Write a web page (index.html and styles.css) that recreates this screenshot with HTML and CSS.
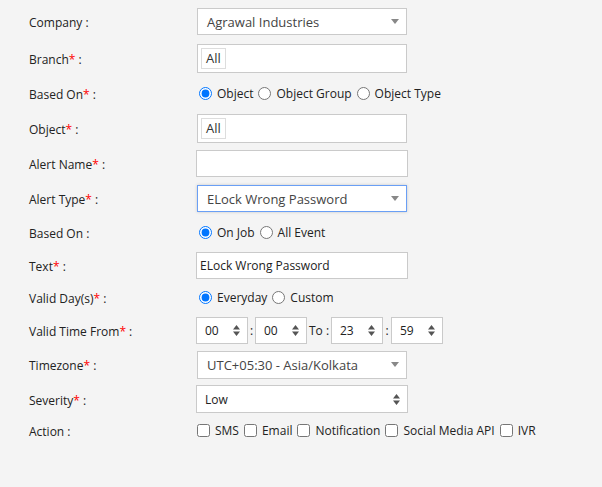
FILE: index.html
```html
<!DOCTYPE html>
<html>
<head>
  <meta charset="utf-8">
  <title>Alert Setting</title>
  <link rel="stylesheet" href="styles.css">
</head>
<body>
  <form class="alert-form">
    <label class="field-label">Company :</label>
    <div class="field">
      <div class="select-box">
        <span>Agrawal Industries</span>
        <svg class="caret" width="8" height="5" viewBox="0 0 8 5"><path d="M0 0h8L4 5z"/></svg>
      </div>
    </div>

    <label class="field-label">Branch<span class="req">*</span> :</label>
    <div class="field">
      <div class="multi-box"><span class="tag">All</span></div>
    </div>

    <label class="field-label">Based On<span class="req">*</span> :</label>
    <div class="field options">
      <label class="opt"><input type="radio" name="based" checked> Object</label>
      <label class="opt"><input type="radio" name="based"> Object Group</label>
      <label class="opt"><input type="radio" name="based"> Object Type</label>
    </div>

    <label class="field-label">Object<span class="req">*</span> :</label>
    <div class="field">
      <div class="multi-box"><span class="tag">All</span></div>
    </div>

    <label class="field-label">Alert Name<span class="req">*</span> :</label>
    <div class="field">
      <input class="text-input" type="text" value="">
    </div>

    <label class="field-label">Alert Type<span class="req">*</span> :</label>
    <div class="field">
      <div class="select-box focused">
        <span>ELock Wrong Password</span>
        <svg class="caret" width="8" height="5" viewBox="0 0 8 5"><path d="M0 0h8L4 5z"/></svg>
      </div>
    </div>

    <label class="field-label">Based On :</label>
    <div class="field options">
      <label class="opt"><input type="radio" name="job" checked> On Job</label>
      <label class="opt"><input type="radio" name="job"> All Event</label>
    </div>

    <label class="field-label">Text<span class="req">*</span> :</label>
    <div class="field">
      <input class="text-input" type="text" value="ELock Wrong Password">
    </div>

    <label class="field-label">Valid Day(s)<span class="req">*</span> :</label>
    <div class="field options">
      <label class="opt"><input type="radio" name="day" checked> Everyday</label>
      <label class="opt"><input type="radio" name="day"> Custom</label>
    </div>

    <label class="field-label">Valid Time From<span class="req">*</span> :</label>
    <div class="field time-row">
      <div class="spin"><span>00</span><svg width="7" height="11" viewBox="0 0 7 11"><path d="M0 4.5L3.5 0 7 4.5zM0 6.5h7L3.5 11z"/></svg></div>
      <span class="sep">:</span>
      <div class="spin"><span>00</span><svg width="7" height="11" viewBox="0 0 7 11"><path d="M0 4.5L3.5 0 7 4.5zM0 6.5h7L3.5 11z"/></svg></div>
      <span class="to">To :</span>
      <div class="spin"><span>23</span><svg width="7" height="11" viewBox="0 0 7 11"><path d="M0 4.5L3.5 0 7 4.5zM0 6.5h7L3.5 11z"/></svg></div>
      <span class="sep wide">:</span>
      <div class="spin"><span>59</span><svg width="7" height="11" viewBox="0 0 7 11"><path d="M0 4.5L3.5 0 7 4.5zM0 6.5h7L3.5 11z"/></svg></div>
    </div>

    <label class="field-label">Timezone<span class="req">*</span> :</label>
    <div class="field">
      <div class="select-box tall">
        <span>UTC+05:30 - Asia/Kolkata</span>
        <svg class="caret" width="8" height="5" viewBox="0 0 8 5"><path d="M0 0h8L4 5z"/></svg>
      </div>
    </div>

    <label class="field-label">Severity<span class="req">*</span> :</label>
    <div class="field">
      <div class="native-select">
        <span>Low</span>
        <svg width="7" height="11" viewBox="0 0 7 11"><path d="M0 4.5L3.5 0 7 4.5zM0 6.5h7L3.5 11z"/></svg>
      </div>
    </div>

    <label class="field-label">Action :</label>
    <div class="field checks">
      <label class="chk"><input type="checkbox"> SMS</label>
      <label class="chk"><input type="checkbox"> Email</label>
      <label class="chk"><input type="checkbox"> Notification</label>
      <label class="chk"><input type="checkbox"> Social Media API</label>
      <label class="chk"><input type="checkbox"> IVR</label>
    </div>
  </form>
</body>
</html>
```

FILE: styles.css
```css
html, body {
  margin: 0;
  padding: 0;
  background: #f4f4f4;
  font-family: "Open Sans", "Noto Sans", sans-serif;
  font-size: 12px;
  color: #222;
}

.alert-form {
  display: grid;
  grid-template-columns: 167px 1fr;
  grid-template-rows: 37px 36px 35px 34px 36px 35px 33px 32px 33px 33px 35px 34px 28px;
  align-items: center;
  padding: 3px 0 0 29px;
}

.field-label {
  line-height: 16px;
  padding-top: 3px;
}

.req {
  color: #f00;
}

.field {
  display: flex;
  align-items: center;
}

/* select2 style boxes */
.select-box {
  box-sizing: border-box;
  width: 210px;
  height: 27px;
  margin-left: 1px;
  padding: 0 7px 0 9px;
  background: #fff;
  border: 1px solid #cacaca;
  display: flex;
  align-items: center;
  justify-content: space-between;
  font-size: 13px;
  color: #444;
}

.select-box.tall {
  height: 28px;
}

.select-box.focused {
  border-color: #6a9ff5;
  box-shadow: 0 0 3px rgba(0, 0, 0, 0.18);
}

.caret {
  fill: #888;
}

.multi-box {
  box-sizing: border-box;
  width: 210px;
  height: 29px;
  margin-left: 1px;
  padding: 3px;
  background: #fff;
  border: 1px solid #cacaca;
  display: flex;
  align-items: center;
}

.tag {
  box-sizing: border-box;
  height: 21px;
  padding: 0 4px;
  border: 1px solid #ddd;
  font-size: 13px;
  line-height: 19px;
  color: #333;
}

.text-input {
  box-sizing: border-box;
  width: 212px;
  height: 27px;
  margin: 0;
  padding: 0 3px;
  background: #fff;
  border: 1px solid #cacaca;
  font-family: inherit;
  font-size: 12px;
  color: #222;
  outline: none;
}

/* radios and checkboxes */
.options {
  padding-left: 3px;
  gap: 5px;
}

.opt, .chk {
  display: flex;
  align-items: center;
  gap: 5px;
}

.opt input, .chk input {
  width: 13px;
  height: 13px;
  margin: 0;
}

.checks {
  padding-left: 1px;
  gap: 5px;
}

/* time spinners */
.spin {
  box-sizing: border-box;
  width: 52px;
  height: 27px;
  padding: 0 7px 0 8px;
  background: #fff;
  border: 1px solid #cacaca;
  display: flex;
  align-items: center;
  justify-content: space-between;
  font-size: 12px;
  color: #222;
}

.spin svg, .native-select svg {
  fill: #555;
}

.sep {
  width: 7px;
  text-align: center;
}

.sep.wide {
  width: 8px;
}

.to {
  width: 22px;
  padding-left: 2px;
}

.native-select {
  box-sizing: border-box;
  width: 212px;
  height: 28px;
  padding: 0 7px 0 8px;
  background: #fff;
  border: 1px solid #cacaca;
  display: flex;
  align-items: center;
  justify-content: space-between;
  font-size: 12px;
  color: #222;
}
```
